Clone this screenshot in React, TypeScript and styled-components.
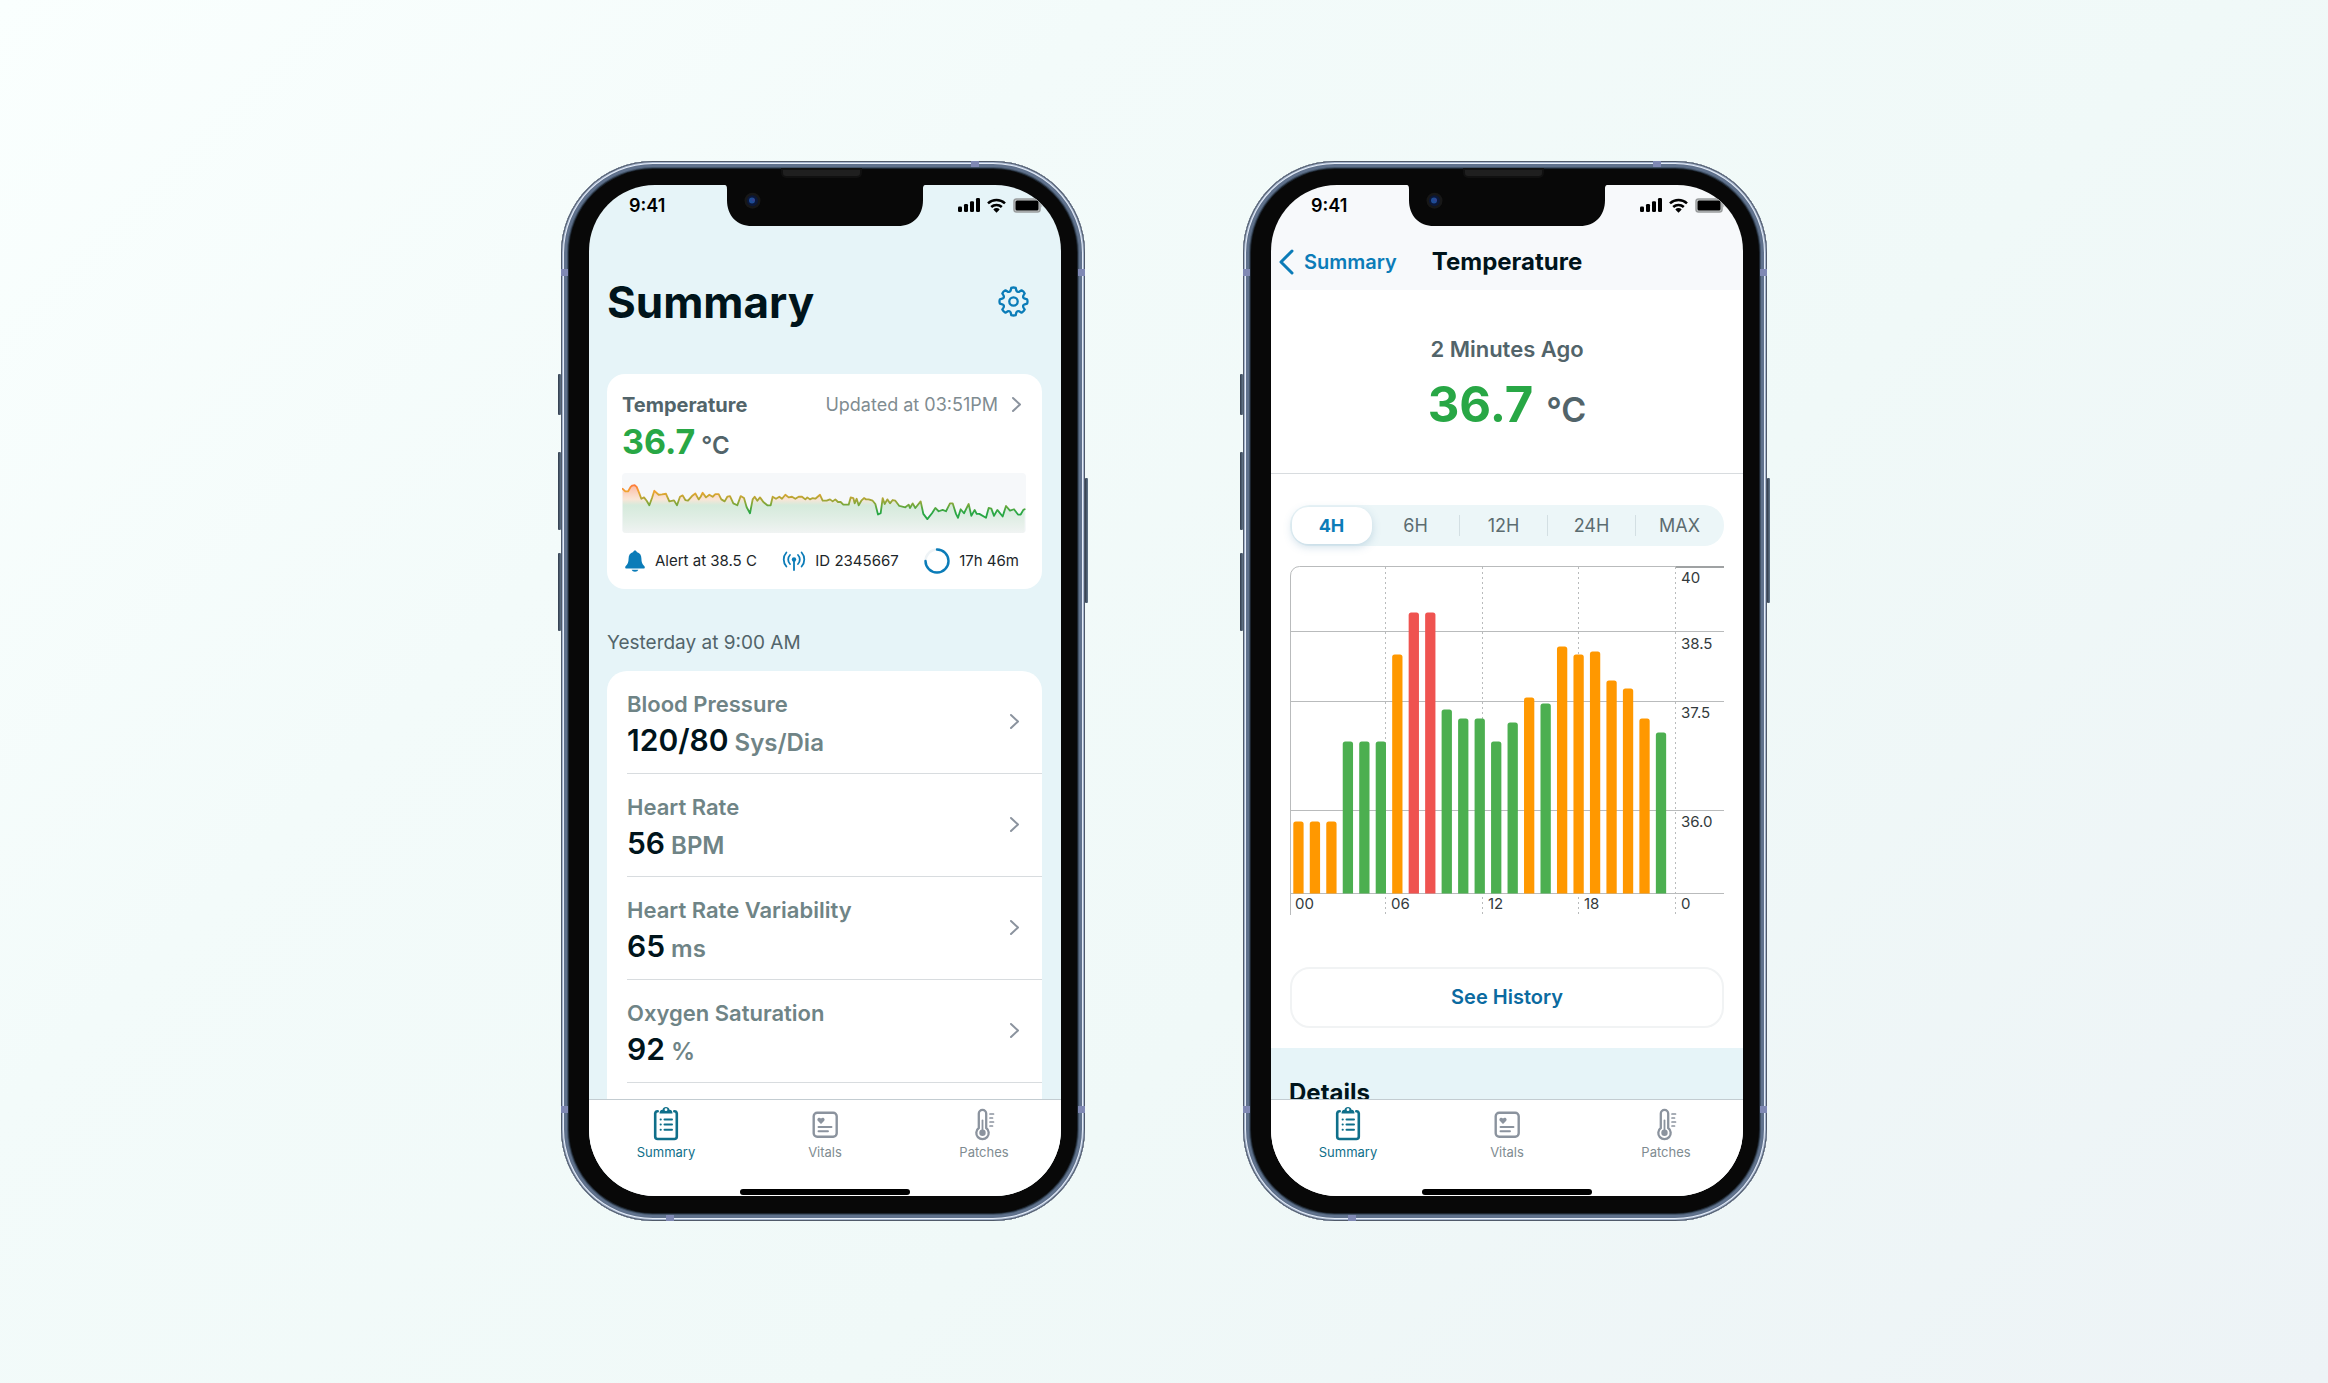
import React from 'react';
import styled, { createGlobalStyle } from 'styled-components';

const colors = {
  ink: '#00141b',
  slate: '#52646a',
  muted: '#6f8486',
  soft: '#7f8c91',
  blue: '#0b7cb8',
  deepBlue: '#0b6aa0',
  teal: '#0f6f8a',
  green: '#28a745',
  grey: '#8b939e',
  ice: '#e6f4f8',
  line: '#d8dcdf',
};

const GlobalStyle = createGlobalStyle`
  *, *::before, *::after { box-sizing: border-box; }
  body {
    margin: 0;
    font-family: Inter, "Liberation Sans", sans-serif;
    color: ${colors.ink};
  }
  h1, h2, h3, p, ul { margin: 0; padding: 0; }
  button, a { font: inherit; color: inherit; text-decoration: none; }
  button { border: 0; background: none; padding: 0; cursor: pointer; }
  svg { display: block; flex: none; }
`;

const Stage = styled.main`
  min-height: 100vh;
  display: flex;
  flex-wrap: wrap;
  align-items: center;
  justify-content: center;
  gap: 158px;
  padding: 40px 40px 42px;
  background: linear-gradient(135deg, #fafffe 0%, #f3fbfa 30%, #f0f9f8 60%, #edf3f6 100%);
`;

/* ---------- Device ---------- */

const Device = styled.section`
  position: relative;
  width: 524px;
  aspect-ratio: 524 / 1060;
  padding: 24px 24px 25px 28px;
  border-radius: 92px;
  background: #080808;
  box-shadow:
    inset 0 0 0 1px #505a6a,
    inset 0 0 0 2px #a3b3cc,
    inset 0 0 0 3px #e6edf8,
    inset 0 0 0 6px #5f718c,
    inset 0 0 0 7px #435468,
    inset 0 0 0 8px #1b242f;
`;

const SideButton = styled.span<{ $side: 'left' | 'right'; $top: number; $length: number }>`
  position: absolute;
  ${(p) => p.$side}: -3px;
  top: ${(p) => p.$top}px;
  width: 3px;
  height: ${(p) => p.$length}px;
  border-radius: 1px;
  background: linear-gradient(90deg, #2f3a4a, #64788c);
`;

const Antenna = styled.span<{ $x: string; $y: string; $flat?: boolean }>`
  position: absolute;
  left: ${(p) => p.$x};
  top: ${(p) => p.$y};
  width: ${(p) => (p.$flat ? 8 : 7)}px;
  height: ${(p) => (p.$flat ? 6 : 7)}px;
  background: #8089b4;
`;

const Earpiece = styled.span`
  position: absolute;
  top: 7px;
  left: 220px;
  width: 81px;
  height: 10px;
  border: 2px solid #101010;
  border-radius: 0 0 5px 5px;
  background: #1f1f1f;
`;

const Screen = styled.div<{ $tint: string }>`
  position: relative;
  height: 100%;
  display: flex;
  flex-direction: column;
  overflow: hidden;
  border-radius: 66px;
  background: ${(p) => p.$tint};
`;

const NotchLayer = styled.div`
  position: absolute;
  top: 0;
  left: 0;
  right: 0;
  display: flex;
  justify-content: center;
`;

const StatusRow = styled.div`
  height: 41px;
  flex: none;
  display: flex;
  align-items: center;
  justify-content: space-between;
  padding: 0 18px 0 40px;
  color: #000;
  font-size: 18px;
  font-weight: 600;
`;

const StatusIcons = styled.span`
  display: flex;
  align-items: center;
  gap: 7px;
`;

const Scroller = styled.div<{ $inset?: boolean }>`
  flex: 1;
  min-height: 0;
  overflow-y: auto;
  scrollbar-width: none;
  padding: ${(p) => (p.$inset ? '0 19px 0 18px' : 0)};
`;

const TabBar = styled.nav`
  flex: none;
  padding: 5px 37px 1px;
  border-top: 1px solid #c3ccd1;
  background: #fff;
`;

const TabList = styled.ul`
  display: flex;
  justify-content: space-between;
  list-style: none;
`;

const Tab = styled.a<{ $active?: boolean }>`
  width: 80px;
  display: flex;
  flex-direction: column;
  align-items: center;
  gap: 2px;
  font-size: 13px;
  line-height: 18px;
  color: ${(p) => (p.$active ? colors.teal : colors.soft)};

  svg { color: ${(p) => (p.$active ? colors.teal : colors.grey)}; }
`;

const HomeIndicator = styled.div`
  width: 170px;
  height: 6px;
  margin: 28px auto 0;
  border-radius: 3px;
  background: #000;
`;

/* ---------- Summary screen ---------- */

const TitleRow = styled.header`
  display: flex;
  align-items: center;
  justify-content: space-between;
  padding: 48px 13px 44px 0;
`;

const Title = styled.h1`
  font-size: 44px;
  line-height: 56px;
  font-weight: 700;
`;

const IconButton = styled.button`
  color: ${colors.blue};
`;

const Card = styled.article`
  padding: 18px 16px 15px 15px;
  border-radius: 18px;
  background: #fff;
`;

const CardHead = styled.div`
  display: flex;
  align-items: center;
  line-height: 26px;
`;

const CardTitle = styled.h2`
  flex: 1;
  font-size: 20px;
  font-weight: 700;
  color: ${colors.slate};
`;

const Updated = styled.a`
  display: flex;
  align-items: center;
  gap: 13px;
  padding-right: 4px;
  font-size: 18px;
  color: ${colors.soft};
`;

const Reading = styled.p<{ $large?: boolean }>`
  display: flex;
  align-items: baseline;
  justify-content: ${(p) => (p.$large ? 'center' : 'flex-start')};
  gap: ${(p) => (p.$large ? 13 : 6)}px;
  margin-top: ${(p) => (p.$large ? 12 : 4)}px;
  font-size: ${(p) => (p.$large ? 49 : 34)}px;
  line-height: ${(p) => (p.$large ? 60 : 40)}px;
  font-weight: 700;
  color: ${colors.green};

  small {
    font-size: ${(p) => (p.$large ? 34 : 24)}px;
    line-height: 1;
    font-weight: 600;
    color: ${colors.slate};
  }
`;

const Spark = styled.svg`
  width: 100%;
  height: 60px;
  margin-top: 11px;
  border-radius: 4px;
  background: #f6f8fa;
`;

const Facts = styled.ul`
  display: flex;
  justify-content: space-between;
  margin-top: 15px;
  padding: 0 7px 0 2px;
  list-style: none;
`;

const Fact = styled.li`
  display: flex;
  align-items: center;
  gap: 9px;
  font-size: 15px;
  line-height: 26px;
  color: #1c2629;
`;

const DateLabel = styled.h2`
  margin: 41px 0 15px;
  font-size: 19px;
  line-height: 26px;
  font-weight: 400;
  color: ${colors.slate};
`;

const VitalList = styled.ul`
  padding-left: 20px;
  border-radius: 20px 20px 0 0;
  background: #fff;
  list-style: none;
`;

const VitalLink = styled.a`
  display: flex;
  align-items: center;
  justify-content: space-between;
  padding: 20px 22px 15px 0;
  border-bottom: 1px solid ${colors.line};

  > svg { margin-bottom: 6px; }
`;

const VitalName = styled.h3`
  font-size: 22px;
  line-height: 26px;
  font-weight: 600;
  color: ${colors.muted};
`;

const VitalValue = styled.p`
  margin-top: 5px;
  font-size: 30px;
  line-height: 36px;
  font-weight: 600;

  small {
    margin-left: 6px;
    font-size: 24px;
    line-height: 1;
    font-weight: 600;
    color: ${colors.muted};
  }
`;

/* ---------- Temperature screen ---------- */

const NavRow = styled.header`
  flex: none;
  display: grid;
  grid-template-columns: 1fr auto 1fr;
  align-items: center;
  height: 64px;
  padding: 8px 8px 0;
`;

const Back = styled.a`
  display: flex;
  align-items: center;
  gap: 10px;
  font-size: 20px;
  line-height: 28px;
  font-weight: 600;
  color: ${colors.blue};
`;

const NavTitle = styled.h1`
  font-size: 24px;
  line-height: 28px;
  font-weight: 700;
`;

const White = styled.div`
  background: #fff;
`;

const Hero = styled.div`
  padding: 45px 0 38px;
  border-bottom: 1px solid ${colors.line};
  text-align: center;
`;

const HeroLabel = styled.h2`
  font-size: 22px;
  line-height: 28px;
  font-weight: 600;
  color: ${colors.slate};
`;

const Panel = styled.div`
  padding: 31px 19px 20px;
`;

const Segments = styled.div`
  display: flex;
  height: 41px;
  padding: 2px 0 2px 2px;
  border-radius: 20px;
  background: #ecf6f8;
`;

const Segment = styled.button<{ $active?: boolean; $ruled?: boolean }>`
  flex: ${(p) => (p.$active ? '0 0 80px' : '1')};
  display: flex;
  align-items: center;
  font-size: 18px;
  font-weight: ${(p) => (p.$active ? 700 : 400)};
  color: ${(p) => (p.$active ? colors.blue : '#5c6c70')};
  border-radius: 16px;
  background: ${(p) => (p.$active ? '#fff' : 'transparent')};
  box-shadow: ${(p) => (p.$active ? '0 3px 8px rgba(70, 130, 170, 0.25)' : 'none')};

  span { flex: 1; }

  &::after {
    content: '';
    width: 1px;
    height: 21px;
    background: ${(p) => (p.$ruled ? '#d3dfe3' : 'transparent')};
  }
`;

const Chart = styled.svg`
  width: 100%;
  height: auto;
  margin-top: 20px;
  font-size: 15px;
`;

const HistoryButton = styled.button`
  width: 100%;
  height: 61px;
  margin-top: 51px;
  border: 2px solid #f1f3f4;
  border-radius: 20px;
  background: #fff;
  font-size: 20px;
  font-weight: 600;
  color: ${colors.deepBlue};
`;

const Details = styled.section`
  padding: 29px 18px 60px;
  background: ${colors.ice};
`;

const DetailsTitle = styled.h2`
  font-size: 24px;
  line-height: 32px;
  font-weight: 700;
`;

/* ---------- Icons ---------- */

const Chevron = () => (
  <svg width="11" height="17" viewBox="0 0 11 17" fill="none" stroke="#8b939e" strokeWidth="2" strokeLinecap="round" strokeLinejoin="round" aria-hidden="true">
    <path d="M2 2l7 6.5L2 15" />
  </svg>
);

const BackChevron = () => (
  <svg width="15" height="26" viewBox="0 0 15 26" fill="none" stroke="currentColor" strokeWidth="3" strokeLinecap="round" strokeLinejoin="round" aria-hidden="true">
    <path d="M13 2L2 13l11 11" />
  </svg>
);

const gearPath = (() => {
  const teeth = 8;
  const step = (Math.PI * 2) / teeth;
  const at = (r: number, a: number) => `${(15.5 + r * Math.sin(a)).toFixed(2)} ${(15.5 - r * Math.cos(a)).toFixed(2)}`;
  let d = `M${at(13.8, -0.16)}`;
  for (let i = 0; i < teeth; i += 1) {
    const a = i * step;
    d += `Q${at(14.4, a)} ${at(13.8, a + 0.16)}`;
    d += `L${at(11.6, a + 0.24)}`;
    d += `Q${at(9.6, a + step / 2)} ${at(11.6, a + step - 0.24)}`;
    d += `L${at(13.8, a + step - 0.16)}`;
  }
  return `${d}Z`;
})();

const Gear = () => (
  <svg width="31" height="31" viewBox="0 0 31 31" fill="none" stroke="currentColor" strokeWidth="2.3" strokeLinejoin="round" aria-hidden="true">
    <path d={gearPath} />
    <circle cx="15.5" cy="15.5" r="4.2" />
  </svg>
);

const Bell = () => (
  <svg width="22" height="22" viewBox="0 0 22 22" fill={colors.blue} aria-hidden="true">
    <path d="M11 .5c1 0 1.6.6 1.7 1.4 3.2.8 4.7 3.3 4.7 6.500 0 4 1 5.800 2.600 7.300.6.6.8 1 .8 1.700 0 .6-.5 1-1.100 1H2.300c-.6 0-1.100-.4-1.100-1 0-.7.2-1.100.8-1.700 1.600-1.500 2.600-3.300 2.600-7.300 0-3.200 1.500-5.700 4.700-6.500C9.400 1.100 10 .5 11 .5zM7.600 19.700h6.800c-.5 1.200-1.800 2-3.400 2s-2.900-.8-3.400-2z" />
  </svg>
);

const Beacon = () => (
  <svg width="24" height="20" viewBox="0 0 24 20" fill="none" stroke={colors.blue} strokeWidth="1.8" strokeLinecap="round" aria-hidden="true">
    <path d="M4.400 1.500a10.500 10.500 0 0 0 0 14M8 4a6.500 6.500 0 0 0 0 9M19.600 1.500a10.500 10.500 0 0 1 0 14M16 4a6.500 6.500 0 0 1 0 9M12 9v10" />
    <circle cx="12" cy="8.5" r="2.2" fill={colors.blue} stroke="none" />
  </svg>
);

const Ring = () => (
  <svg width="26" height="26" viewBox="0 0 26 26" fill="none" strokeWidth="2.4" strokeLinecap="round" aria-hidden="true">
    <circle cx="13" cy="13" r="11.5" stroke="#eef3f6" />
    <path d="M13 1.500A11.500 11.500 0 1 1 1.500 13" stroke={colors.blue} />
  </svg>
);

const Clipboard = () => (
  <svg width="26" height="36" viewBox="0 0 26 36" fill="none" stroke="currentColor" strokeWidth="2.6" strokeLinecap="round" strokeLinejoin="round" aria-hidden="true">
    <path d="M4.700 6.300A2.500 2.500 0 0 0 2.200 8.500v23A2.500 2.500 0 0 0 4.700 34h16.600a2.500 2.500 0 0 0 2.500-2.500v-23A2.500 2.500 0 0 0 21.300 6.300" />
    <path fillRule="evenodd" stroke="none" fill="currentColor" d="M9.500 4.700a3.600 3.600 0 0 1 7 0c2 .2 3 1.400 3 3.800H6.500c0-2.400 1-3.600 3-3.800zM13 3.300a1.400 1.400 0 1 0 0 2.800 1.400 1.400 0 0 0 0-2.800z" />
    <path strokeWidth="2" d="M11.500 14.500h7.500M11.500 19.500h7.500M11.500 24.700h7.500M7.600 14.500h.2M7.600 19.500h.2M7.600 24.700h.2" />
  </svg>
);

const VitalsCard = () => (
  <svg width="28" height="36" viewBox="0 0 28 36" fill="none" stroke="currentColor" strokeWidth="2.4" strokeLinecap="round" aria-hidden="true">
    <rect x="2.7" y="7.7" width="23" height="24" rx="3.5" />
    <path strokeWidth="1.9" d="M7.500 22h13M7.500 26.300h9.500" />
    <path stroke="none" fill="currentColor" d="M10 19l-3-3c-1.800-2 .8-4.600 3-2.500 2.200-2.100 4.800.5 3 2.500z" />
  </svg>
);

const Thermometer = () => (
  <svg width="24" height="36" viewBox="0 0 24 36" fill="none" stroke="currentColor" strokeLinecap="round" aria-hidden="true">
    <path strokeWidth="2.3" d="M6.800 8.600a3.700 3.700 0 0 1 7.400 0V23a6.200 6.200 0 1 1-7.400 0z" />
    <path strokeWidth="1.8" d="M10.500 15.500v11" />
    <circle cx="10.5" cy="27.8" r="3.2" fill="currentColor" stroke="none" />
    <path strokeWidth="1.7" d="M18 9h3.500M18 13h2.500M18 17h3.500M18 21h2.500" />
  </svg>
);

const Signal = () => (
  <svg width="22" height="14" viewBox="0 0 22 14" aria-hidden="true">
    <rect x="0" y="8.5" width="4" height="5.5" rx="1.2" />
    <rect x="6" y="6" width="4" height="8" rx="1.2" />
    <rect x="12" y="3.2" width="4" height="10.8" rx="1.2" />
    <rect x="18" y="0" width="4" height="14" rx="1.2" />
  </svg>
);

const Wifi = () => (
  <svg width="19" height="15" viewBox="0 0 19 15" fill="none" stroke="#000" strokeWidth="2.5" aria-hidden="true">
    <path d="M1 5.400a12.300 12.300 0 0 1 17 0M4.200 9a7.800 7.800 0 0 1 10.600 0" />
    <path stroke="none" fill="#000" d="M9.500 14.700L6.300 11.400a4.600 4.600 0 0 1 6.400 0z" />
  </svg>
);

const Battery = () => (
  <svg width="30" height="15" viewBox="0 0 30 15" aria-hidden="true">
    <rect x="1" y="1" width="26" height="13" rx="2.5" fill="#c9cccd" stroke="#9a9d9e" strokeWidth="1.5" />
    <rect x="2.5" y="2.5" width="23" height="10" rx="1.5" />
    <path d="M28.500 5.500c1 .5 1 3.500 0 4z" fill="#9a9d9e" />
  </svg>
);

const Notch = () => (
  <svg width="202" height="42" viewBox="0 0 202 42" aria-hidden="true">
    <path d="M0 0C3 0 3 2 3 5v10c0 16 10 26 25 26h146c15 0 25-10 25-26V5c0-3 0-5 3-5z" fill="#080808" />
    <circle cx="28.5" cy="15.7" r="8" fill="#171717" />
    <circle cx="28.5" cy="15.7" r="5.5" fill="#0b1738" />
    <circle cx="28" cy="15.5" r="3" fill="#1e4b94" />
    <circle cx="29.5" cy="15" r="1.2" fill="#3a3f8c" />
  </svg>
);

/* ---------- Data ---------- */

const sparkPoints =
  '2,48 10,56 18,56 26,42 31,38 38,37 44,42 52,62 58,78 66,74 74,84 82,98 90,76 97,54 110,66 120,65 132,63 142,86 156,83 165,98 174,72 182,68 190,82 198,84 210,70 220,62 230,80 236,72 242,60 252,74 262,66 272,72 280,64 290,64 298,80 308,86 316,72 324,70 334,92 346,98 356,70 366,76 374,104 384,122 392,80 398,72 406,84 414,74 424,88 436,98 446,98 452,72 462,78 472,72 480,78 490,66 500,74 510,72 520,78 530,72 540,72 550,80 556,74 564,80 572,76 580,78 594,66 602,84 614,84 624,80 632,86 640,80 648,88 656,88 664,96 680,96 686,74 694,76 698,92 704,78 710,98 718,84 726,76 732,80 740,80 752,84 760,94 768,126 776,122 782,76 788,94 796,80 804,92 812,82 820,84 832,100 850,104 860,96 864,106 872,92 880,106 896,86 904,124 916,140 930,122 940,106 950,116 962,112 972,116 984,92 992,92 1002,124 1008,136 1016,110 1026,122 1040,94 1048,130 1058,112 1064,124 1072,124 1092,136 1100,106 1108,108 1116,130 1126,112 1142,132 1152,100 1164,114 1176,110 1188,126 1196,126 1204,112 1208,110';

const vitals = [
  { name: 'Blood Pressure', value: '120/80', unit: 'Sys/Dia' },
  { name: 'Heart Rate', value: '56', unit: 'BPM' },
  { name: 'Heart Rate Variability', value: '65', unit: 'ms' },
  { name: 'Oxygen Saturation', value: '92', unit: '%' },
];

const tone = { o: '#ff9800', g: '#4caf50', r: '#ef5350' };

const bars: Array<[keyof typeof tone, number]> = [
  ['o', 72], ['o', 72], ['o', 72], ['g', 152], ['g', 152], ['g', 152],
  ['o', 239], ['r', 281], ['r', 281], ['g', 184], ['g', 175], ['g', 175],
  ['g', 152], ['g', 171], ['o', 196], ['g', 190], ['o', 247], ['o', 239],
  ['o', 242], ['o', 213], ['o', 205], ['o', 175], ['g', 161],
];

const levels = [
  { y: 1, label: '40', labelY: 17 },
  { y: 65, label: '38.5', labelY: 83 },
  { y: 135, label: '37.5', labelY: 152 },
  { y: 244, label: '36.0', labelY: 261 },
  { y: 327, label: '0', labelY: 343 },
];

const hours = [
  { x: 0, label: '00' },
  { x: 96, label: '06' },
  { x: 193, label: '12' },
  { x: 289, label: '18' },
  { x: 386, label: '' },
];

const ranges = ['4H', '6H', '12H', '24H', 'MAX'];

/* ---------- Shared parts ---------- */

function Phone({ tint, label, children }: { tint: string; label: string; children: React.ReactNode }) {
  return (
    <Device aria-label={label}>
      <SideButton $side="left" $top={213} $length={41} />
      <SideButton $side="left" $top={291} $length={78} />
      <SideButton $side="left" $top={392} $length={78} />
      <SideButton $side="right" $top={317} $length={125} />
      <Antenna $x="0" $y="108px" />
      <Antenna $x="calc(100% - 7px)" $y="108px" />
      <Antenna $x="0" $y="945px" />
      <Antenna $x="calc(100% - 7px)" $y="945px" />
      <Antenna $x="410px" $y="0" $flat />
      <Antenna $x="105px" $y="calc(100% - 6px)" $flat />
      <Earpiece />
      <Screen $tint={tint}>
        <NotchLayer><Notch /></NotchLayer>
        <StatusRow>
          <time>9:41</time>
          <StatusIcons><Signal /><Wifi /><Battery /></StatusIcons>
        </StatusRow>
        {children}
        <TabBar aria-label="Sections">
          <TabList>
            <li><Tab href="#summary" $active aria-current="page"><Clipboard />Summary</Tab></li>
            <li><Tab href="#vitals"><VitalsCard />Vitals</Tab></li>
            <li><Tab href="#patches"><Thermometer />Patches</Tab></li>
          </TabList>
          <HomeIndicator />
        </TabBar>
      </Screen>
    </Device>
  );
}

function Sparkline() {
  return (
    <Spark viewBox="0 0 1212 182" preserveAspectRatio="none" aria-hidden="true">
      <defs>
        <linearGradient id="sparkStroke" gradientUnits="userSpaceOnUse" x1="0" y1="36" x2="0" y2="120">
          <stop offset="0" stopColor="#ff7a3c" />
          <stop offset="0.25" stopColor="#f0a52e" />
          <stop offset="0.75" stopColor="#6fa83c" />
          <stop offset="1" stopColor="#28a745" />
        </linearGradient>
        <linearGradient id="sparkFill" gradientUnits="userSpaceOnUse" x1="0" y1="36" x2="0" y2="182">
          <stop offset="0" stopColor="#ff8a65" stopOpacity="0.6" />
          <stop offset="0.3" stopColor="#ffc9a0" stopOpacity="0.4" />
          <stop offset="0.42" stopColor="#a5d6ae" stopOpacity="0.4" />
          <stop offset="1" stopColor="#ebefec" stopOpacity="0.5" />
        </linearGradient>
      </defs>
      <polygon points={`2,182 ${sparkPoints} 1208,182`} fill="url(#sparkFill)" />
      <polyline points={sparkPoints} fill="none" stroke="url(#sparkStroke)" strokeWidth="5.5" strokeLinejoin="round" strokeLinecap="round" />
    </Spark>
  );
}

function BarChart() {
  return (
    <Chart viewBox="0 0 434 350" role="img" aria-label="Temperature by hour">
      <g stroke="#b9bbbc" fill="none">
        <path d="M0.500 349V10A9 9 0 0 1 9.500 0.500H434" />
        {levels.slice(1).map((l) => (
          <line key={l.label} x1="0" x2="434" y1={l.y + 0.5} y2={l.y + 0.5} />
        ))}
        <line x1="386" x2="434" y1="1" y2="1" stroke="#9fa2a3" strokeWidth="2" />
        {hours.slice(1).map((h) => (
          <line key={h.x} x1={h.x - 0.5} x2={h.x - 0.5} y1="1" y2="349" strokeDasharray="2 3" />
        ))}
      </g>
      {bars.map(([kind, h], i) => (
        <path
          key={i}
          transform={`translate(${(3.3 + i * 16.48).toFixed(2)} ${327.5 - h})`}
          d={`M0 ${h}V2.500Q0 0 2.500 0H7.800Q10.300 0 10.300 2.500V${h}Z`}
          fill={tone[kind]}
        />
      ))}
      <g fill="#333a3c">
        {levels.map((l) => (
          <text key={l.label} x="391" y={l.labelY}>{l.label}</text>
        ))}
        {hours.slice(0, 4).map((h) => (
          <text key={h.label} x={h.x + 5} y="343">{h.label}</text>
        ))}
      </g>
    </Chart>
  );
}

/* ---------- Screens ---------- */

function SummaryScreen() {
  return (
    <Phone tint={colors.ice} label="Summary">
      <Scroller $inset>
        <TitleRow>
          <Title>Summary</Title>
          <IconButton type="button" aria-label="Settings"><Gear /></IconButton>
        </TitleRow>
        <Card>
          <CardHead>
            <CardTitle>Temperature</CardTitle>
            <Updated href="#temperature">Updated at 03:51PM<Chevron /></Updated>
          </CardHead>
          <Reading>36.7<small>°C</small></Reading>
          <Sparkline />
          <Facts>
            <Fact><Bell />Alert at 38.5 C</Fact>
            <Fact><Beacon />ID 2345667</Fact>
            <Fact><Ring />17h 46m</Fact>
          </Facts>
        </Card>
        <DateLabel>Yesterday at 9:00 AM</DateLabel>
        <VitalList>
          {vitals.map((v) => (
            <li key={v.name}>
              <VitalLink href="#vitals">
                <div>
                  <VitalName>{v.name}</VitalName>
                  <VitalValue>{v.value}<small>{v.unit}</small></VitalValue>
                </div>
                <Chevron />
              </VitalLink>
            </li>
          ))}
          <li><VitalLink as="div" /></li>
        </VitalList>
      </Scroller>
    </Phone>
  );
}

function TemperatureScreen() {
  return (
    <Phone tint="#f7f9fb" label="Temperature">
      <NavRow>
        <Back href="#summary"><BackChevron />Summary</Back>
        <NavTitle>Temperature</NavTitle>
      </NavRow>
      <Scroller>
        <White>
          <Hero>
            <HeroLabel>2 Minutes Ago</HeroLabel>
            <Reading $large>36.7<small>°C</small></Reading>
          </Hero>
          <Panel>
            <Segments role="group" aria-label="Range">
              {ranges.map((r, i) => (
                <Segment key={r} type="button" $active={i === 0} $ruled={i > 0 && i < 4} aria-pressed={i === 0}>
                  <span>{r}</span>
                </Segment>
              ))}
            </Segments>
            <BarChart />
            <HistoryButton type="button">See History</HistoryButton>
          </Panel>
        </White>
        <Details>
          <DetailsTitle>Details</DetailsTitle>
        </Details>
      </Scroller>
    </Phone>
  );
}

export default function App() {
  return (
    <>
      <GlobalStyle />
      <Stage>
        <SummaryScreen />
        <TemperatureScreen />
      </Stage>
    </>
  );
}
